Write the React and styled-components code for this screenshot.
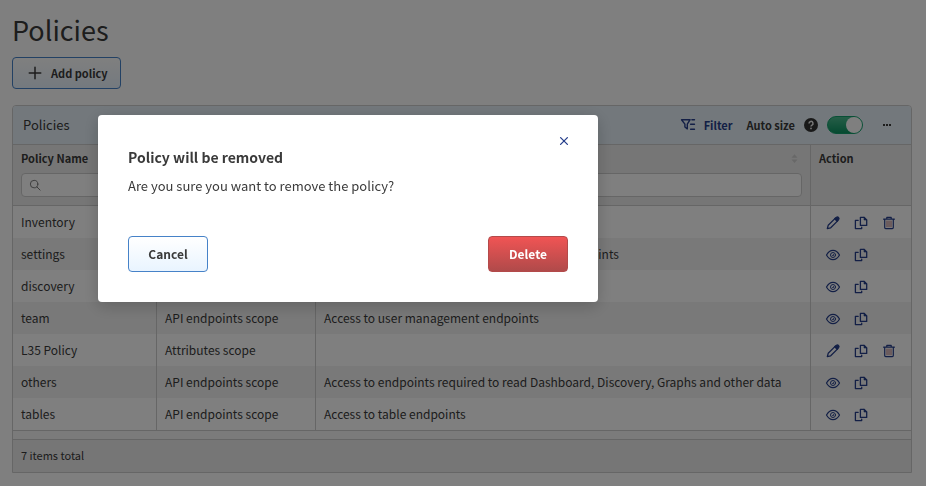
import React from "react";
import styled, { createGlobalStyle } from "styled-components";

const GlobalStyle = createGlobalStyle`
  *, *::before, *::after { box-sizing: border-box; }
  body {
    margin: 0;
    background: #fff;
    color: #3a3a3a;
    font: 400 13px/20px "Noto Sans CJK SC", "Noto Sans", sans-serif;
    overflow: hidden;
  }
  button, input { font: inherit; color: inherit; }
`;

const Page = styled.main`
  padding: 12px 14px 12px 12px;
`;

const PageTitle = styled.h1`
  margin: 0 0 9px;
  font-size: 27px;
  line-height: 36px;
  font-weight: 400;
`;

const Button = styled.button`
  display: inline-flex;
  align-items: center;
  justify-content: center;
  height: ${(p) => (p.$compact ? 32 : 36)}px;
  min-width: 80px;
  padding: 0 ${(p) => (p.$compact ? 12 : 16)}px;
  gap: 6px;
  border: 1px solid ${(p) => (p.$danger ? "#b34a4a" : "#4682c8")};
  border-radius: 4px;
  background: ${(p) =>
    p.$danger
      ? "linear-gradient(#f05454, #b04a4a)"
      : "linear-gradient(#fff, #e9f4ff)"};
  color: ${(p) => (p.$danger ? "#fff" : "#3a3a3a")};
  font-size: ${(p) => (p.$compact ? 11 : 12)}px;
  font-weight: 700;
`;

const Panel = styled.section`
  margin-top: 16px;
  border: 1px solid #ccc;
  border-radius: 4px 4px 0 0;
  overflow: hidden;
`;

const Toolbar = styled.header`
  display: flex;
  align-items: center;
  height: 39px;
  padding: 0 16px 0 10px;
  border-bottom: 1px solid #ccc;
  background: #e6f1f8;
`;

const PanelTitle = styled.h2`
  flex: 1;
  margin: 0;
  font-size: 13px;
  font-weight: 400;
`;

const ToolButton = styled.button`
  display: inline-flex;
  align-items: center;
  gap: 8px;
  padding: 0;
  border: 0;
  background: none;
  color: #263f8c;
  font-size: 11px;
  font-weight: 700;
`;

const SwitchLabel = styled.label`
  display: inline-flex;
  align-items: center;
  gap: 9px;
  margin: 0 16px 0 14px;
  font-size: 11px;
  font-weight: 700;
`;

const Switch = styled.input`
  appearance: none;
  display: flex;
  align-items: center;
  justify-content: flex-end;
  width: 36px;
  height: 18px;
  margin: 0;
  border: 1px solid #12a06c;
  border-radius: 9px;
  background: linear-gradient(#4cbc90, #0d9462);
  &::before {
    content: "";
    width: 16px;
    height: 16px;
    border-radius: 50%;
    background: #fff;
  }
`;

const Table = styled.table`
  width: 100%;
  border-collapse: separate;
  border-spacing: 0;
  table-layout: fixed;
  border-bottom: 1px solid #ccc;
`;

const Col = styled.col`
  width: ${(p) => p.$width};
`;

const HeadCell = styled.th`
  height: 61px;
  padding: 3px 8px 8px;
  border-bottom: 1px solid #ccc;
  border-right: 1px solid #ccc;
  background: #ededed;
  font-size: 11px;
  font-weight: 700;
  text-align: left;
  vertical-align: top;
  &:last-child { border-right: 0; }
`;

const HeadLine = styled.div`
  display: flex;
  align-items: center;
  justify-content: space-between;
  height: 20px;
  padding-right: 4px;
`;

const SearchBox = styled.label`
  display: flex;
  align-items: center;
  height: 24px;
  margin-top: 5px;
  padding: 0 7px;
  border: 1px solid #ccc;
  border-radius: 4px;
  background: #fff;
`;

const SearchInput = styled.input`
  flex: 1;
  min-width: 0;
  height: 20px;
  border: 0;
  padding: 0 4px;
  background: none;
  outline: 0;
`;

const Row = styled.tr`
  background: ${(p) => (p.$shaded ? "#f3f3f3" : "#fff")};
`;

const Cell = styled.td`
  height: 32px;
  padding: 0 8px;
  border-right: 1px solid #ccc;
  font-size: 12px;
  white-space: nowrap;
  &:last-child { border-right: 0; }
`;

const Actions = styled.div`
  display: flex;
  align-items: center;
  gap: 12px;
  padding: 2px 0 0 6px;
`;

const IconButton = styled.button`
  display: flex;
  align-items: center;
  justify-content: center;
  width: 16px;
  height: 16px;
  padding: 0;
  border: 0;
  background: none;
  color: #263f8c;
`;

const Spacer = styled.div`
  height: 8px;
  background: #f7f7f7;
`;

const Footer = styled.footer`
  height: 33px;
  padding: 5px 8px 7px;
  border-top: 1px solid #ccc;
  background: #ededed;
  font-size: 11px;
`;

const Overlay = styled.div`
  position: fixed;
  inset: 0;
  display: flex;
  align-items: flex-start;
  padding: 115px 98px;
  background: rgba(0, 0, 0, 0.5);
`;

const Dialog = styled.div`
  width: 100%;
  max-width: 500px;
  padding: 18px 30px 30px;
  border-radius: 4px;
  background: #fff;
  box-shadow: 0 4px 16px rgba(0, 0, 0, 0.2);
`;

const CloseRow = styled.div`
  display: flex;
  align-items: center;
  justify-content: flex-end;
  height: 16px;
  margin-right: -4px;
`;

const DialogTitle = styled.h2`
  margin: 0;
  font-size: 14px;
  line-height: 16px;
  font-weight: 700;
`;

const DialogText = styled.p`
  margin: 11px 0 40px;
`;

const DialogButtons = styled.div`
  display: flex;
  justify-content: space-between;
`;

const Svg = ({ size = 16, children, ...rest }) => (
  <svg width={size} height={size} viewBox="0 0 16 16" fill="none" stroke="currentColor"
    strokeWidth="1.3" strokeLinecap="round" strokeLinejoin="round" aria-hidden="true" {...rest}>
    {children}
  </svg>
);

const PlusIcon = () => (
  <Svg size={20} strokeWidth="1.2"><path d="M8 3.4v9.2M3.4 8h9.2" /></Svg>
);
const SearchIcon = () => (
  <Svg size={12} stroke="#777"><circle cx="6.8" cy="6.8" r="5" /><path d="M10.5 10.5l4.3 4.3" /></Svg>
);
const FilterIcon = () => (
  <Svg strokeWidth="1.4">
    <path d="M1.5 2.7h8.6L7.3 7.1v4.8L4.9 10V7.1z M11.9 2.7h2.6M10.6 7.2h3.9M10.6 12.2h3.9" />
  </Svg>
);
const HelpIcon = () => (
  <svg width="14" height="14" viewBox="0 0 14 14" aria-hidden="true">
    <circle cx="7" cy="7" r="7" fill="#333" />
    <path d="M5 5.4a2 2 0 1 1 3 1.7c-.7.4-1 .7-1 1.4" fill="none" stroke="#eee" strokeWidth="1.5" />
    <circle cx="7" cy="10.4" r=".9" fill="#eee" />
  </svg>
);
const DotsIcon = () => (
  <Svg fill="#3a3a3a" stroke="none">
    <rect x="4" y="7" width="2" height="2" /><rect x="7" y="7" width="2" height="2" /><rect x="10" y="7" width="2" height="2" />
  </Svg>
);
const SortIcon = () => (
  <svg width="7" height="9" viewBox="0 0 8 10" fill="#d0d0d0" aria-hidden="true">
    <path d="M4 0l3.5 4h-7zM4 10L.5 6h7z" />
  </svg>
);
const PencilIcon = () => (
  <Svg>
    <path d="M2.3 13.7l.9-3.4 7.2-7.2 2.5 2.5-7.2 7.2z" />
    <path d="M9.7 3.8l1.8-1.6c1.4-1 3.2.8 2.2 2.2l-1.5 1.8z" fill="currentColor" />
  </Svg>
);
const EyeIcon = () => (
  <Svg strokeWidth="1.2">
    <path d="M1.5 8C3.2 4.9 5.4 3.3 8 3.3S12.8 4.9 14.5 8C12.8 11.1 10.6 12.7 8 12.7S3.2 11.1 1.5 8z" />
    <circle cx="8" cy="8" r="2.5" strokeWidth="1" />
    <path d="M8 7A1 1 0 1 1 7 8H8z" fill="currentColor" stroke="none" />
  </Svg>
);
const CopyIcon = () => (
  <Svg>
    <path d="M7.4 2.3h3.6l2.7 2.7v5.4H7.4z" />
    <path d="M11 2.3V5h2.7z" fill="currentColor" strokeWidth=".6" />
    <path d="M5.2 5.3H2.4v8.3h6.3v-1.4" />
  </Svg>
);
const TrashIcon = () => (
  <Svg strokeWidth="1.2">
    <path d="M2.6 4.2h10.8M5.8 4V2.4h4.4V4M3.7 4.4v8.2q0 1 1 1h6.6q1 0 1-1V4.4" />
    <path d="M6 6v5.8M8 6v5.8M10 6v5.8" stroke="#9c4f55" strokeWidth=".8" />
  </Svg>
);
const CloseIcon = () => (
  <Svg><path d="M4.6 4.6l6.8 6.8M11.4 4.6l-6.8 6.8" /></Svg>
);

const api = "API endpoints scope";
const rows = [
  { name: "Inventory", scope: "Attributes scope", text: "", editable: true },
  { name: "settings", scope: api, text: "Access to application and account settings endpoints" },
  { name: "discovery", scope: api, text: "Access to discovery endpoints" },
  { name: "team", scope: api, text: "Access to user management endpoints" },
  { name: "L35 Policy", scope: "Attributes scope", text: "", editable: true },
  { name: "others", scope: api, text: "Access to endpoints required to read Dashboard, Discovery, Graphs and other data" },
  { name: "tables", scope: api, text: "Access to table endpoints" },
];

const FilterHead = ({ label, title }) => (
  <HeadCell scope="col" aria-label={label}>
    <HeadLine><span>{title}</span><SortIcon /></HeadLine>
    <SearchBox><SearchIcon /><SearchInput aria-label={`Search ${label}`} /></SearchBox>
  </HeadCell>
);

export default function App() {
  return (
    <>
      <GlobalStyle />
      <Page>
        <PageTitle>Policies</PageTitle>
        <Button $compact type="button"><PlusIcon />Add policy</Button>
        <Panel>
          <Toolbar>
            <PanelTitle>Policies</PanelTitle>
            <ToolButton type="button"><FilterIcon />Filter</ToolButton>
            <SwitchLabel>Auto size<HelpIcon /><Switch type="checkbox" role="switch" defaultChecked /></SwitchLabel>
            <IconButton type="button" aria-label="More"><DotsIcon /></IconButton>
          </Toolbar>
          <Table>
            <colgroup>
              <Col $width="144px" /><Col $width="159px" /><Col $width="auto" /><Col $width="100px" />
            </colgroup>
            <thead>
              <tr>
                <FilterHead label="Policy Name" title="Policy Name" />
                <FilterHead label="Scope" />
                <FilterHead label="Description" />
                <HeadCell scope="col"><HeadLine>Action</HeadLine></HeadCell>
              </tr>
            </thead>
            <tbody>
              {rows.map((r, i) => (
                <Row key={r.name} $shaded={i % 2 === 1}>
                  <Cell>{r.name}</Cell>
                  <Cell>{r.scope}</Cell>
                  <Cell>{r.text}</Cell>
                  <Cell>
                    <Actions>
                      <IconButton type="button" aria-label={r.editable ? "Edit" : "View"}>
                        {r.editable ? <PencilIcon /> : <EyeIcon />}
                      </IconButton>
                      <IconButton type="button" aria-label="Copy"><CopyIcon /></IconButton>
                      {r.editable && <IconButton type="button" aria-label="Remove"><TrashIcon /></IconButton>}
                    </Actions>
                  </Cell>
                </Row>
              ))}
            </tbody>
          </Table>
          <Spacer />
          <Footer>7 items total</Footer>
        </Panel>
      </Page>
      <Overlay>
        <Dialog role="dialog" aria-modal="true" aria-labelledby="dialog-title">
          <CloseRow><IconButton type="button" aria-label="Close"><CloseIcon /></IconButton></CloseRow>
          <DialogTitle id="dialog-title">Policy will be removed</DialogTitle>
          <DialogText>Are you sure you want to remove the policy?</DialogText>
          <DialogButtons>
            <Button type="button">Cancel</Button>
            <Button $danger type="button">Delete</Button>
          </DialogButtons>
        </Dialog>
      </Overlay>
    </>
  );
}
